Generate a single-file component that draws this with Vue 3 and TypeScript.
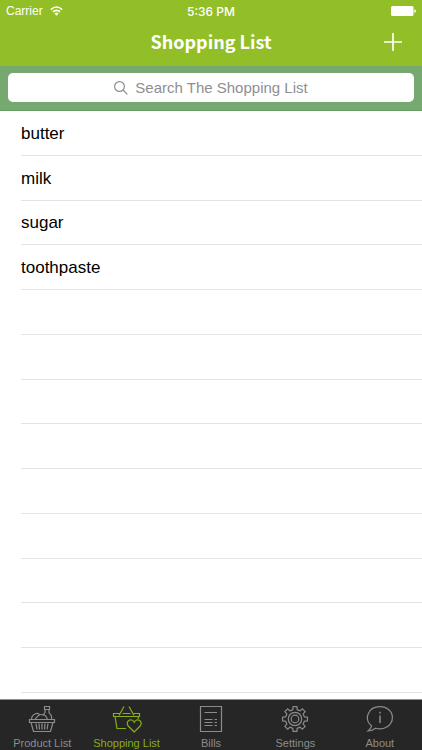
<script setup lang="ts">
import { computed, ref } from 'vue'

type TabId = 'products' | 'shopping' | 'bills' | 'settings' | 'about'

const tabs: { id: TabId; label: string }[] = [
  { id: 'products', label: 'Product List' },
  { id: 'shopping', label: 'Shopping List' },
  { id: 'bills', label: 'Bills' },
  { id: 'settings', label: 'Settings' },
  { id: 'about', label: 'About' },
]

const activeTab = ref<TabId>('shopping')
const query = ref('')
const items = ref<string[]>(['butter', 'milk', 'sugar', 'toothpaste'])
const rowCount = 13

const rows = computed(() => {
  const needle = query.value.trim().toLowerCase()
  const found = items.value.filter((item) => item.includes(needle))
  return Array.from({ length: Math.max(rowCount, found.length) }, (_, i) => found[i] ?? '')
})

// Outline of an eight-toothed gear centred on (15, 15).
function gearPath(): string {
  const corners: [number, number][] = [
    [-13, 9.6],
    [-9, 12.6],
    [9, 12.6],
    [13, 9.6],
  ]
  const points: string[] = []
  for (let tooth = 0; tooth < 8; tooth++) {
    for (const [offset, radius] of corners) {
      const angle = ((tooth * 45 + offset) * Math.PI) / 180
      points.push(`${(15 + radius * Math.sin(angle)).toFixed(2)} ${(15 - radius * Math.cos(angle)).toFixed(2)}`)
    }
  }
  return `M${points.join('L')}Z`
}
const gear = gearPath()
</script>

<template>
  <div class="screen">
    <header class="top">
      <div class="status">
        <div class="carrier">
          <span>Carrier</span>
          <svg width="13" height="10" viewBox="0 0 13 10" aria-hidden="true">
            <path d="M.8 3.6Q6.5-1.6 12.2 3.6M2.9 5.9Q6.5 2.7 10.1 5.9" fill="none" stroke="#fff" stroke-width="1.6" />
            <path d="M4.4 7.4Q6.5 5.6 8.6 7.4L6.5 9.7Z" fill="#fff" />
          </svg>
        </div>
        <span class="clock">5:36 PM</span>
        <svg class="battery" width="25" height="10" viewBox="0 0 25 10" aria-hidden="true">
          <rect width="22.5" height="10" rx="1.5" fill="#fff" />
          <path d="M23.3 3.2Q25 3.6 25 5T23.3 6.8Z" fill="#fff" />
        </svg>
      </div>
      <div class="nav">
        <h1>Shopping List</h1>
        <button class="add" type="button" aria-label="Add item">
          <svg width="18" height="18" viewBox="0 0 18 18" aria-hidden="true">
            <path d="M9 0V18M0 9H18" stroke="#fff" stroke-width="1.7" />
          </svg>
        </button>
      </div>
    </header>

    <div class="search">
      <label class="field">
        <svg width="14" height="14" viewBox="0 0 14 14" aria-hidden="true">
          <circle cx="5.5" cy="5.5" r="4.9" />
          <path d="M9 9L13.4 13.4" />
        </svg>
        <input v-model="query" type="text" placeholder="Search The Shopping List" aria-label="Search The Shopping List" />
      </label>
    </div>

    <ul class="list">
      <li v-for="(item, i) in rows" :key="i">{{ item }}</li>
    </ul>

    <nav class="tabs">
      <button
        v-for="tab in tabs"
        :key="tab.id"
        type="button"
        :class="{ active: tab.id === activeTab }"
        @click="activeTab = tab.id"
      >
        <svg width="30" height="30" viewBox="0 0 30 30" aria-hidden="true">
          <g v-if="tab.id === 'products'">
            <path d="M2.5 15.5H27.5V18.5H2.5ZM4 18.5L6.5 27.5H23.5L26 18.5" />
            <path d="M9 19.5L10 25.5M12 19.5L12.5 25.5M15 19.5V25.5M18 19.5L17.5 25.5M21 19.5L20 25.5" />
            <path d="M17.5 2.5H22.5V5.5H17.5ZM18 5.5V8.5L15.8 11.5M22 5.5V8.5L24.5 12V15.5" />
            <path d="M4.5 15.5Q4.5 11.5 8 10Q10.5 8.5 12.5 10.5M8 15.5Q11 10.5 15 10.5T20.5 15.5" />
          </g>
          <g v-else-if="tab.id === 'shopping'">
            <path d="M7 11.5L12 2.5M22 11.5L17 2.5M7.5 9.5H1.5V12.5H27.5V9.5H21.5M10.5 9.5H18.5M3 12.5L5 24.5H14M26.5 12.5L26 15" />
            <path d="M22.2 28L16.2 22Q14.5 19.5 16 17.2Q17.5 15.4 19.7 16Q21.4 16.5 22.2 18.2Q23 16.5 24.7 16Q27 15.4 28.4 17.2Q30 19.5 28.2 22Z" />
          </g>
          <g v-else-if="tab.id === 'bills'">
            <path d="M4.5 2.5H25.5V27.5H4.5Z" />
            <path d="M8.5 8.5H21M8.5 15.5H16.5M8.5 18.5H16.5M8.5 21.5H16.5M18.5 15.5H21M18.5 18.5H21M18.5 21.5H21" />
          </g>
          <g v-else-if="tab.id === 'settings'">
            <path :d="gear" stroke-linejoin="round" />
            <circle cx="15" cy="15" r="6.7" />
            <circle cx="15" cy="15" r="3.8" />
          </g>
          <g v-else>
            <path d="M6.5 21.8C-1.5 15 3 2.7 15 2.7C22 2.7 27.4 7.3 27.4 13.5C27.4 22 18 26.5 10.5 24.2Q7 27 3 27Q6 25 6.5 21.8Z" />
            <path d="M15 11.5V19M15 7.8V9.5" stroke-width="1.5" />
          </g>
        </svg>
        <span>{{ tab.label }}</span>
      </button>
    </nav>
  </div>
</template>

<style>
body {
  margin: 0;
}
</style>

<style scoped>
.screen {
  display: flex;
  flex-direction: column;
  min-height: 100vh;
  background: #fff;
  color: #000;
  font-family: 'Liberation Sans', Arial, sans-serif;
}

button {
  padding: 0;
  border: 0;
  background: none;
  color: inherit;
  font: inherit;
}

.top {
  background: #92bf27;
  color: #fff;
}

.status {
  display: grid;
  grid-template-columns: 1fr auto 1fr;
  align-items: center;
  height: 22px;
  padding: 0 6px;
  font-size: 12px;
}

.carrier {
  display: flex;
  align-items: center;
  gap: 7px;
}

.clock {
  font-family: Inter, sans-serif;
  font-weight: 500;
}

.battery {
  justify-self: end;
}

.nav {
  display: grid;
  grid-template-columns: 1fr auto 1fr;
  align-items: center;
  height: 44px;
  padding: 0 20px;
}

h1 {
  grid-column: 2;
  margin: 0;
  padding-bottom: 6px;
  font-family: 'Noto Sans CJK SC', 'Open Sans', sans-serif;
  font-size: 18px;
  font-weight: 700;
  line-height: 28px;
}

.add {
  display: flex;
  justify-self: end;
  padding-bottom: 4px;
}

.search {
  padding: 7px 8px 8px;
  border-bottom: 1px solid #699c65;
  background: #75a970;
}

.field {
  display: flex;
  align-items: center;
  justify-content: center;
  gap: 7px;
  height: 29px;
  border-radius: 5px;
  background: #fff;
}

.field svg {
  fill: none;
  stroke: #8e8e93;
  stroke-width: 1.2;
}

.field input {
  field-sizing: content;
  padding: 0;
  border: 0;
  outline: 0;
  background: none;
  color: #000;
  font: inherit;
  font-size: 15px;
}

.field input::placeholder {
  color: #8e8e93;
}

.list {
  display: grid;
  flex: 1;
  grid-auto-rows: 1fr;
  margin: 0;
  padding: 0 0 6px 21px;
  list-style: none;
  font-size: 17px;
}

.list li {
  display: flex;
  align-items: center;
  padding-top: 2px;
  border-bottom: 1px solid #e3e3e5;
}

.tabs {
  display: grid;
  grid-template-columns: repeat(5, 1fr);
  height: 50px;
  border-top: 1px solid #8f8f8f;
  background: #262626;
  color: #8c8c8c;
  font-size: 11px;
  line-height: 14px;
}

.tabs button {
  display: flex;
  flex-direction: column;
  align-items: center;
  padding-top: 4px;
  gap: 2px;
}

.tabs svg {
  fill: none;
  stroke: currentColor;
  stroke-width: 1.2;
}

.tabs .active {
  color: #86b014;
}
</style>
